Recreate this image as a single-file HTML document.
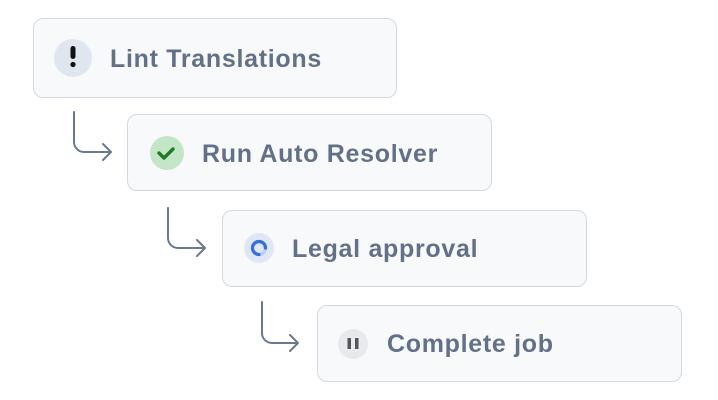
<!DOCTYPE html>
<html><head><style>
body{margin:0;width:718px;height:400px;background:#fff;position:relative;overflow:hidden;font-family:"Liberation Sans",sans-serif}
.b{position:absolute;width:365px;height:77px;border:1.5px solid #d3d9e3;border-radius:10px;background:#f8f9fb;box-sizing:border-box}
.t{position:absolute;font-size:25px;font-weight:bold;color:#627089;letter-spacing:0.7px}
.c{position:absolute;border-radius:50%}
svg{position:absolute;left:0;top:0}
</style></head><body>
<div class="b" style="left:33px;top:18px;height:80px;width:364px"></div>
<div class="b" style="left:127px;top:114px"></div>
<div class="b" style="left:222px;top:210px"></div>
<div class="b" style="left:317px;top:305px;height:77px"></div>

<div class="c" style="left:54px;top:39px;width:38px;height:38px;background:#e0e6ee"></div>
<div class="c" style="left:150px;top:136px;width:34px;height:34px;background:#c4e6c6"></div>
<div class="c" style="left:244px;top:233px;width:30px;height:30px;background:#dfe6f6"></div>
<div class="c" style="left:338px;top:329px;width:30px;height:30px;background:#e8e9ec"></div>

<div class="t" style="left:110px;top:45px">Lint Translations</div>
<div class="t" style="left:202px;top:140px">Run Auto Resolver</div>
<div class="t" style="left:292px;top:235px">Legal approval</div>
<div class="t" style="left:387px;top:330px">Complete job</div>

<svg width="718" height="400">
<g fill="none" stroke="#6a7890" stroke-width="2" stroke-linecap="round" stroke-linejoin="round">
<path d="M74 112V142a10 10 0 0 0 10 10H111M103 144l8 8-8 8"/>
<path d="M168 208V238a10 10 0 0 0 10 10H205M197 240l8 8-8 8"/>
<path d="M262 302V333a10 10 0 0 0 10 10H298M290 335l8 8-8 8"/>
</g>
<rect x="70.5" y="46" width="5" height="13" rx="2.5" fill="#111"/>
<circle cx="73" cy="64.5" r="2.6" fill="#111"/>
<path d="M159 153l5 5 9-9" fill="none" stroke="#1e7a24" stroke-width="3.4" stroke-linecap="round" stroke-linejoin="round"/>
<circle cx="259" cy="248" r="6.5" fill="none" stroke="#bccdf2" stroke-width="3.2"/>
<path d="M265.5 248A6.5 6.5 0 1 1 259 241.5" fill="none" stroke="#2f6fe0" stroke-width="3.2" stroke-linecap="round" transform="rotate(90 259 248)"/>
<rect x="347.5" y="338" width="3.5" height="11" fill="#555"/>
<rect x="355" y="338" width="3.5" height="11" fill="#555"/>
</svg>
</body></html>
